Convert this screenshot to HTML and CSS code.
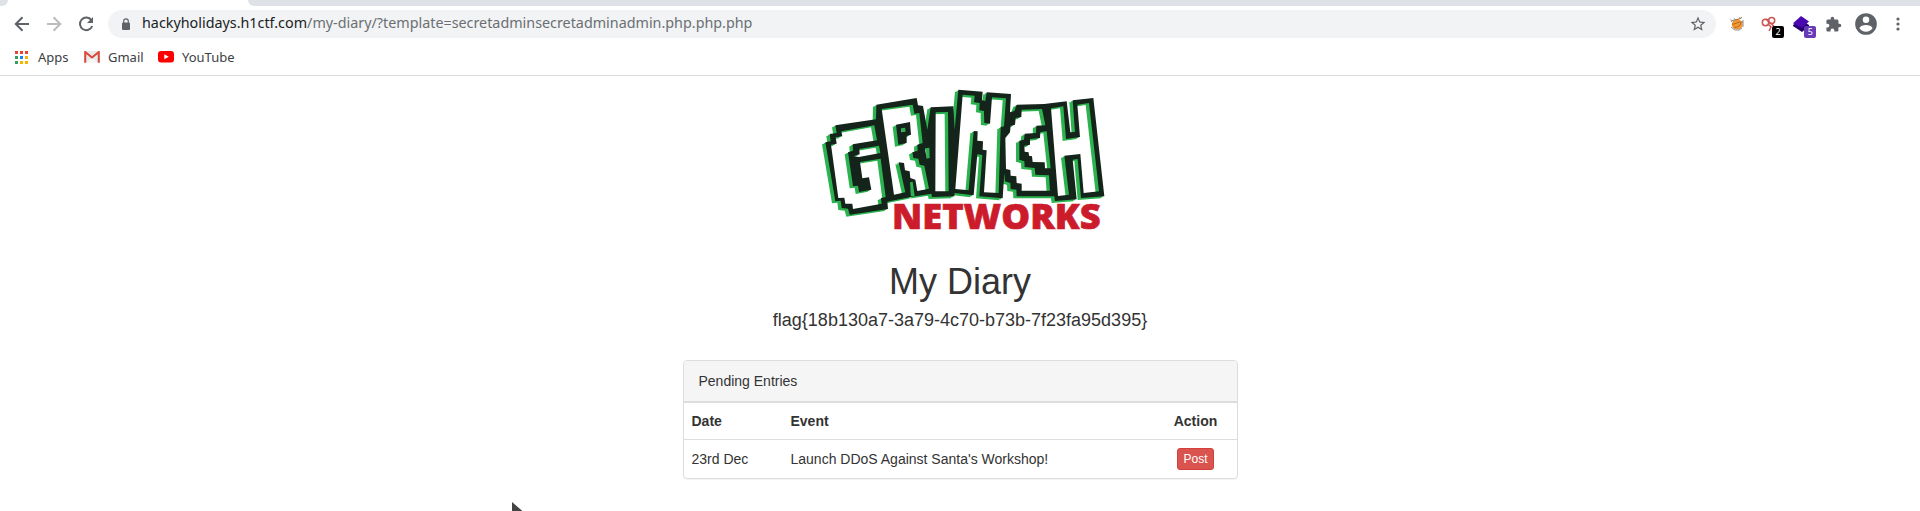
FILE: index.html
```html
<!DOCTYPE html>
<html lang="en">
<head>
<meta charset="utf-8">
<title>My Diary</title>
<link rel="stylesheet" href="styles.css">
</head>
<body>
<div class="tabstrip"><div class="tab-edge tab-edge-left"></div><div class="tab-active"></div><div class="tab-edge tab-edge-right"></div></div>
<div class="toolbar">
  <div class="nav">
    <svg width="24" height="24" viewBox="0 0 24 24" fill="none" stroke="#5f6368" stroke-width="2"><path d="M19 12H6M12.5 5.3 5.8 12l6.7 6.7"/></svg>
    <svg width="24" height="24" viewBox="0 0 24 24" fill="none" stroke="#babcbe" stroke-width="2"><path d="M5 12h13M11.500 5.300 18.200 12l-6.700 6.700"/></svg>
    <svg width="24" height="24" viewBox="0 0 24 24" fill="none" stroke="#5f6368" stroke-width="2"><path d="M17.400 8.200A6.300 6.300 0 1 0 18.200 14"/><path d="M19 5v6h-6z" fill="#5f6368" stroke="none"/></svg>
  </div>
  <div class="omnibox">
    <svg width="10" height="13" viewBox="0 0 10 13"><rect x="1" y="4.500" width="8" height="7.500" rx="1" fill="#5f6368"/><path d="M2.700 5V3.200a2.300 2.300 0 0 1 4.600 0V5" fill="none" stroke="#5f6368" stroke-width="1.200"/></svg>
    <div class="url"><span class="host">hackyholidays.h1ctf.com</span>/my-diary/?template=secretadminsecretadminadmin.php.php.php</div>
    <svg class="star" width="18" height="18" viewBox="0 0 24 24" fill="#5f6368"><path d="M22 9.240l-7.190-.620L12 2 9.190 8.630 2 9.240l5.460 4.730L5.820 21 12 17.270 18.180 21l-1.630-7.030L22 9.240zM12 15.400l-3.760 2.270 1-4.280-3.320-2.880 4.380-.380L12 6.100l1.710 4.040 4.380.380-3.320 2.880 1 4.280L12 15.400z"/></svg>
  </div>
  <div class="extensions">
    <div class="ext"><svg width="16" height="16" viewBox="0 0 16 16"><ellipse cx="8.300" cy="8.600" rx="5.500" ry="5" fill="#f29a35"/><path d="M2 5.500c3-2.500 7-1 11-4M3 8c3 1 6-3 11-2M5 11c3 1 6-1 7-4" fill="none" stroke="#b5611f"/><path d="M1.500 3.800 5 5M5 2.200l2 2M10 1.500l2 1M14 4v7M2 11l4 3h4l3-2" fill="none" stroke="#89939b"/></svg></div>
    <div class="ext"><svg width="16" height="16" viewBox="0 0 16 16" fill="none" stroke="#cb5550" stroke-width="1.500"><circle cx="4.500" cy="6.500" r="3.200"/><circle cx="10.700" cy="4.500" r="3"/><path d="m7 8 3 3-2 4M10 7l5 6M5 3l5 5"/></svg><span class="badge badge-black">2</span></div>
    <div class="ext"><svg width="16" height="16" viewBox="0 0 16 16"><path d="m0 9 8-5 8 5v1l-7 6-9-6z" fill="#260070"/><path d="m8 0 8 5.500L9 12 0 7.200z" fill="#4908b0"/></svg><span class="badge badge-purple">5</span></div>
    <div class="ext"><svg width="17" height="17" viewBox="0 0 24 24" fill="#5f6368"><path d="M20.500 11H19V7c0-1.100-.900-2-2-2h-4V3.500a2.500 2.500 0 0 0-5 0V5H4c-1.100 0-1.990.900-1.990 2v3.800H3.500a2.700 2.700 0 0 1 0 5.400H2V20c0 1.100.900 2 2 2h3.800v-1.500a2.700 2.700 0 0 1 5.400 0V22H17c1.100 0 2-.900 2-2v-4h1.500a2.500 2.500 0 0 0 0-5z"/></svg></div>
    <div class="ext"><svg width="26" height="26" viewBox="0 0 24 24" fill="#5f6368"><path d="M12 2a10 10 0 1 0 0 20 10 10 0 0 0 0-20zm0 3a3 3 0 1 1 0 6 3 3 0 0 1 0-6zm0 14.200a7.200 7.200 0 0 1-6-3.220c.030-1.990 4-3.080 6-3.080s5.970 1.090 6 3.080a7.200 7.200 0 0 1-6 3.220z"/></svg></div>
    <div class="ext"><svg width="4" height="14" viewBox="0 0 4 14" fill="#5f6368"><circle cx="2" cy="2" r="1.600"/><circle cx="2" cy="7" r="1.600"/><circle cx="2" cy="12" r="1.600"/></svg></div>
  </div>
</div>
<div class="bookmarks">
  <div class="bookmark bm-apps"><svg width="13" height="13" viewBox="0 0 13 13"><path fill="#ea4335" d="M0 0h3v3H0zM5 0h3v3H5zM10 0h3v3h-3z"/><path fill="#34a05a" d="M0 5h3v3H0zM0 10h3v3H0z"/><path fill="#1a82f0" d="M5 5h3v3H5z"/><path fill="#f5b400" d="M10 5h3v3h-3zM5 10h3v3H5zM10 10h3v3h-3z"/></svg>Apps</div>
  <div class="bookmark bm-gmail"><svg width="16" height="12" viewBox="0 0 16 12"><path d="M1 0h14v11.500H1z" fill="#e9e9e9"/><path d="M2 11.500 8 6l6 5.500" fill="#f7f7f7" stroke="#ddd" stroke-width=".5"/><path d="M1.200 11.700V1L8 6.500 14.800 1v10.700" fill="none" stroke="#d9473b" stroke-width="2"/></svg>Gmail</div>
  <div class="bookmark bm-youtube"><svg width="16" height="12" viewBox="0 0 16 12"><rect width="16" height="11.500" rx="3" fill="#f00"/><path d="m6.300 3.300 4.500 2.500-4.500 2.500z" fill="#fff"/></svg>YouTube</div>
</div>
<main class="page">
  <svg class="logo" width="310" height="160" viewBox="0 0 930 480">
    <defs>
      <path id="grinch" fill-rule="evenodd" d="
        M76 137 198 119 199 75 320 55 324 77 339 79 352 150 362 83 430 80 434 150 445 30 518 36 516 62 526 64 530 38 603 43 600 98 613 94 620 75 703 73 770 65 781 158 795 157 788 62 850 55 883 350 813 355 803 238 788 240 800 359 735 364 733 350 620 350 619 330 602 328 601 310 585 305 583 280 578 356 508 350 517 226 502 224 491 347 434 340 433 350 366 352 364 342 302 352 232 366 234 388 119 405 114 387 95 385 92 363 76 365 46 188 62 185 59 163 80 160Z
        M94 155 193 137 201 182 128 194 129 213 114 218 129 320 144 318 147 337 184 330 177 293 157 296 150 247 212 237 227 352 213 355 215 372 129 388 127 372 106 372 103 354 85 355 63 195 80 192 77 173 97 170Z
        M148 208 207 198 211 220 147 232 130 230 149 224Z
        M215 88 308 75 313 102 328 100 338 190 322 195 323 213 307 218 310 235 325 237 329 255 343 258 357 327 322 334 316 300 301 295 299 275 285 272 282 250 266 248 286 338 252 345Z
        M258 135 300 127 303 165 290 168 290 190 265 195Z
        M273 146 285 144 287 156 275 158Z
        M345 206 358 204 359 235 350 237Z
        M300 308 308 306 314 350 303 350Z
        M377 98 414 97 416 335 376 335Z
        M458 45 494 48 492 68 509 70 508 92 522 94 522 105 523 130 540 132 546 53 588 56 582 140 572 142 566 340 522 338 530 212 518 210 519 185 502 183 503 155 491 154 476 332 436 328Z
        M635 90 696 88 706 137 679 138 678 160 644 162 642 180 628 183 628 240 643 245 644 262 674 265 676 285 717 287 720 333 635 333 635 312 620 310 619 290 602 288 601 271 588 268 586 175 600 158 602 138 615 135 617 115 634 112Z
        M710 155 722 266 705 266 704 248 668 247 666 230 657 228 656 218 644 216 643 198 660 195 660 178 690 175 691 157Z
        M723 86 760 80 768 178 810 172 802 75 837 70 867 335 821 340 811 223 763 228 777 345 744 349Z"/>
    </defs>
    <use href="#grinch" class="logo-shadow" x="-10" y="5"/>
    <use href="#grinch" class="logo-shadow" x="-5" y="2"/>
    <use href="#grinch" class="logo-ink" y="-1"/>
    <text class="logo-word" x="246" y="446" textLength="626" lengthAdjust="spacingAndGlyphs">NETWORKS</text>
  </svg>
  <h1>My Diary</h1>
  <p class="flag">flag{18b130a7-3a79-4c70-b73b-7f23fa95d395}</p>
  <section class="panel">
    <div class="panel-heading">Pending Entries</div>
    <div class="row row-head"><div>Date</div><div>Event</div><div class="action">Action</div></div>
    <div class="row row-entry"><div>23rd Dec</div><div>Launch DDoS Against Santa's Workshop!</div><div class="action"><span class="btn">Post</span></div></div>
  </section>
</main>
<svg class="cursor" width="16" height="24" viewBox="0 0 16 24"><path d="M0 0v19l5-5 3 8 3-1-3-8h7z"/></svg>
</body>
</html>
```
FILE: styles.css
```css
* { box-sizing: border-box; }
body { margin: 0; height: 511px; overflow: hidden; background: #fff; color: #333; font: 14px/20px "Liberation Sans", Arial, sans-serif; }
svg { display: block; flex: none; }
.tabstrip { display: flex; height: 6px; background: #fff; }
.tab-edge { height: 6px; background: #dee1e6; }
.tab-edge-left { width: 8px; border-bottom-right-radius: 7px; }
.tab-active { width: 240px; }
.tab-edge-right { flex: 1; border-bottom-left-radius: 7px; }
.toolbar { display: flex; align-items: center; height: 36px; }
.nav { display: flex; gap: 8px; width: 108px; padding-left: 10px; }
.omnibox { display: flex; align-items: center; width: 1608px; height: 28px; padding: 0 9px 0 13px; border-radius: 14px; background: #f1f3f4; }
.url { margin-left: 11px; flex: 1; color: #6b6f73; font: 14.34px/26px "Noto Sans", sans-serif; height: 28px; white-space: nowrap; }
.host { color: #202124; }
.extensions { display: flex; align-items: center; flex: 1; padding-left: 5px; }
.ext { position: relative; display: flex; justify-content: center; width: 32.2px; }
.badge { position: absolute; left: 19px; top: 10px; width: 12px; height: 12px; border-radius: 2px; color: #fff; font: 9px/12px "Noto Sans", sans-serif; text-align: center; }
.badge-black { background: #000; }
.badge-purple { background: #673ab7; }
.bookmarks { display: flex; align-items: center; height: 34px; padding: 0 0 3px 15px; border-bottom: 1px solid #dadce0; color: #3c4043; font: 13px/20px "Noto Sans", sans-serif; }
.bookmark { display: flex; align-items: center; }
.bm-apps { width: 69px; gap: 10px; }
.bm-gmail { width: 74px; gap: 8px; }
.bm-youtube { gap: 8px; }
.page { display: flex; flex-direction: column; align-items: center; padding-top: 4px; }
.logo { margin-left: 10px; }
.logo-shadow { fill: #2bb34f; }
.logo-ink { fill: #14241a; }
.logo-word { font: 800 106px "Open Sans", sans-serif; fill: #cc1c2b; stroke: #cc1c2b; stroke-width: 2px; }
h1 { margin: 22px 0 0; font-size: 36px; line-height: 40px; font-weight: 500; }
.flag { margin: 8px 0 0; font-size: 18px; line-height: 20px; }
.panel { width: 555px; margin-top: 30px; border: 1px solid #ddd; border-radius: 4px; box-shadow: 0 1px 1px rgba(0,0,0,.05); }
.panel-heading { height: 41px; padding: 10px 15px; border-bottom: 1px solid #ddd; border-radius: 3px 3px 0 0; background: #f5f5f5; }
.row { display: grid; grid-template-columns: 99px 1fr 82px; align-items: center; border-top: 1px solid #ddd; padding-left: 8px; }
.row-head { height: 37px; font-weight: 700; }
.row-entry { height: 39px; padding-bottom: 1px; }
.action { text-align: center; }
.btn { display: block; width: 37px; height: 22px; margin: 0 auto; border: 1px solid #d43f3a; border-radius: 3px; background: #d9534f; color: #fff; font-size: 12px; line-height: 20px; }
.cursor { position: absolute; left: 512px; top: 502px; fill: #444; }
```
